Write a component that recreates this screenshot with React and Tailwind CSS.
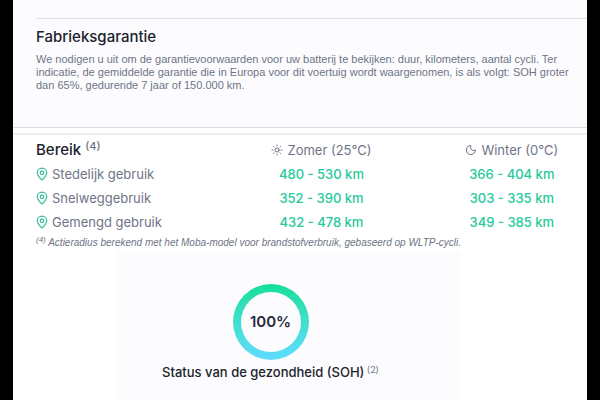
import React from 'react';
import { MapPin, Moon, Sun } from 'lucide-react';

const ranges = [
  { label: 'Stedelijk gebruik', summer: '480 - 530 km', winter: '366 - 404 km' },
  { label: 'Snelweggebruik', summer: '352 - 390 km', winter: '303 - 335 km' },
  { label: 'Gemengd gebruik', summer: '432 - 478 km', winter: '349 - 385 km' },
];

function Warranty() {
  return (
    <section className="h-32 bg-[#fcfcfe] border-b border-[#dcdde1] pl-[23px] pt-[18px]">
      <div className="border-t border-[#dfe0e4] pt-2">
        <h2 className="text-[15px] leading-5 font-medium text-[#20222c]">Fabrieksgarantie</h2>
        <p className="mt-[6px] font-['Liberation_Sans',sans-serif] text-[11px] leading-[13px] text-[#6e7486] whitespace-nowrap">
          We nodigen u uit om de garantievoorwaarden voor uw batterij te bekijken: duur, kilometers, aantal cycli. Ter
          <br />
          indicatie, de gemiddelde garantie die in Europa voor dit voertuig wordt waargenomen, is als volgt: SOH groter
          <br />
          dan 65%, gedurende 7 jaar of 150.000 km.
        </p>
      </div>
    </section>
  );
}

function Range() {
  return (
    <section className="mt-[5px] border-t-2 border-[#ececef] pl-[23px] pt-[3px]">
      {/* the table runs a little past the right edge of the page */}
      <div className="-mr-5">
        <table className="w-full table-fixed text-[13px] leading-5 text-[#6e7486]">
          <thead>
            <tr className="h-6">
              <th scope="col" className="p-0 text-left align-middle text-[15px] font-medium text-[#20222c]">
                Bereik <sup className="text-[11px] leading-none text-[#6e7486]">(4)</sup>
              </th>
              <th scope="col" className="p-0 font-normal">
                <span className="flex items-center justify-center gap-1">
                  <Sun size={12} strokeWidth={2} />
                  Zomer (25°C)
                </span>
              </th>
              <th scope="col" className="p-0 font-normal">
                <span className="flex items-center justify-center gap-1">
                  <Moon size={12} strokeWidth={2} />
                  Winter (0°C)
                </span>
              </th>
            </tr>
          </thead>
          <tbody>
            {ranges.map((r) => (
              <tr key={r.label} className="h-6">
                <th scope="row" className="p-0 text-left font-normal">
                  <span className="-ml-px flex items-center gap-[3px]">
                    <MapPin size={14} strokeWidth={2} className="text-[#35bd98]" />
                    {r.label}
                  </span>
                </th>
                <td className="p-0 text-center font-medium text-[#26c99b]">{r.summer}</td>
                <td className="p-0 text-center font-medium text-[#26c99b]">{r.winter}</td>
              </tr>
            ))}
          </tbody>
        </table>
      </div>
      <p className="font-['Liberation_Sans',sans-serif] text-[10px] leading-[18px] italic text-[#6e7486] whitespace-nowrap">
        <sup className="text-[8px] leading-none">(4)</sup> Actieradius berekend met het Moba-model voor brandstofverbruik, gebaseerd op WLTP-cycli.
      </p>
    </section>
  );
}

function Health() {
  return (
    <section className="ml-[18%] w-[60%] flex-1 flex flex-col items-center bg-[#fcfcfe] pt-8 pr-9">
      <div className="size-[76px] rounded-full bg-linear-to-b from-[#10df98] to-[#5fdcff] p-2">
        <div className="size-full rounded-full bg-[#fcfcfe] flex items-center justify-center text-[15px] font-semibold text-[#262b3c]">
          100%
        </div>
      </div>
      <p className="mt-[2px] text-[13px] leading-5 font-medium text-[#20222c] whitespace-nowrap">
        Status van de gezondheid (SOH) <sup className="-ml-px text-[9px] leading-none font-normal text-[#6e7486]">(2)</sup>
      </p>
    </section>
  );
}

export default function App() {
  return (
    <div className="min-h-screen flex bg-black px-[13px] font-['Inter','Liberation_Sans',sans-serif]">
      <main className="flex-1 min-w-0 flex flex-col overflow-hidden bg-white">
        <Warranty />
        <Range />
        <Health />
      </main>
    </div>
  );
}
